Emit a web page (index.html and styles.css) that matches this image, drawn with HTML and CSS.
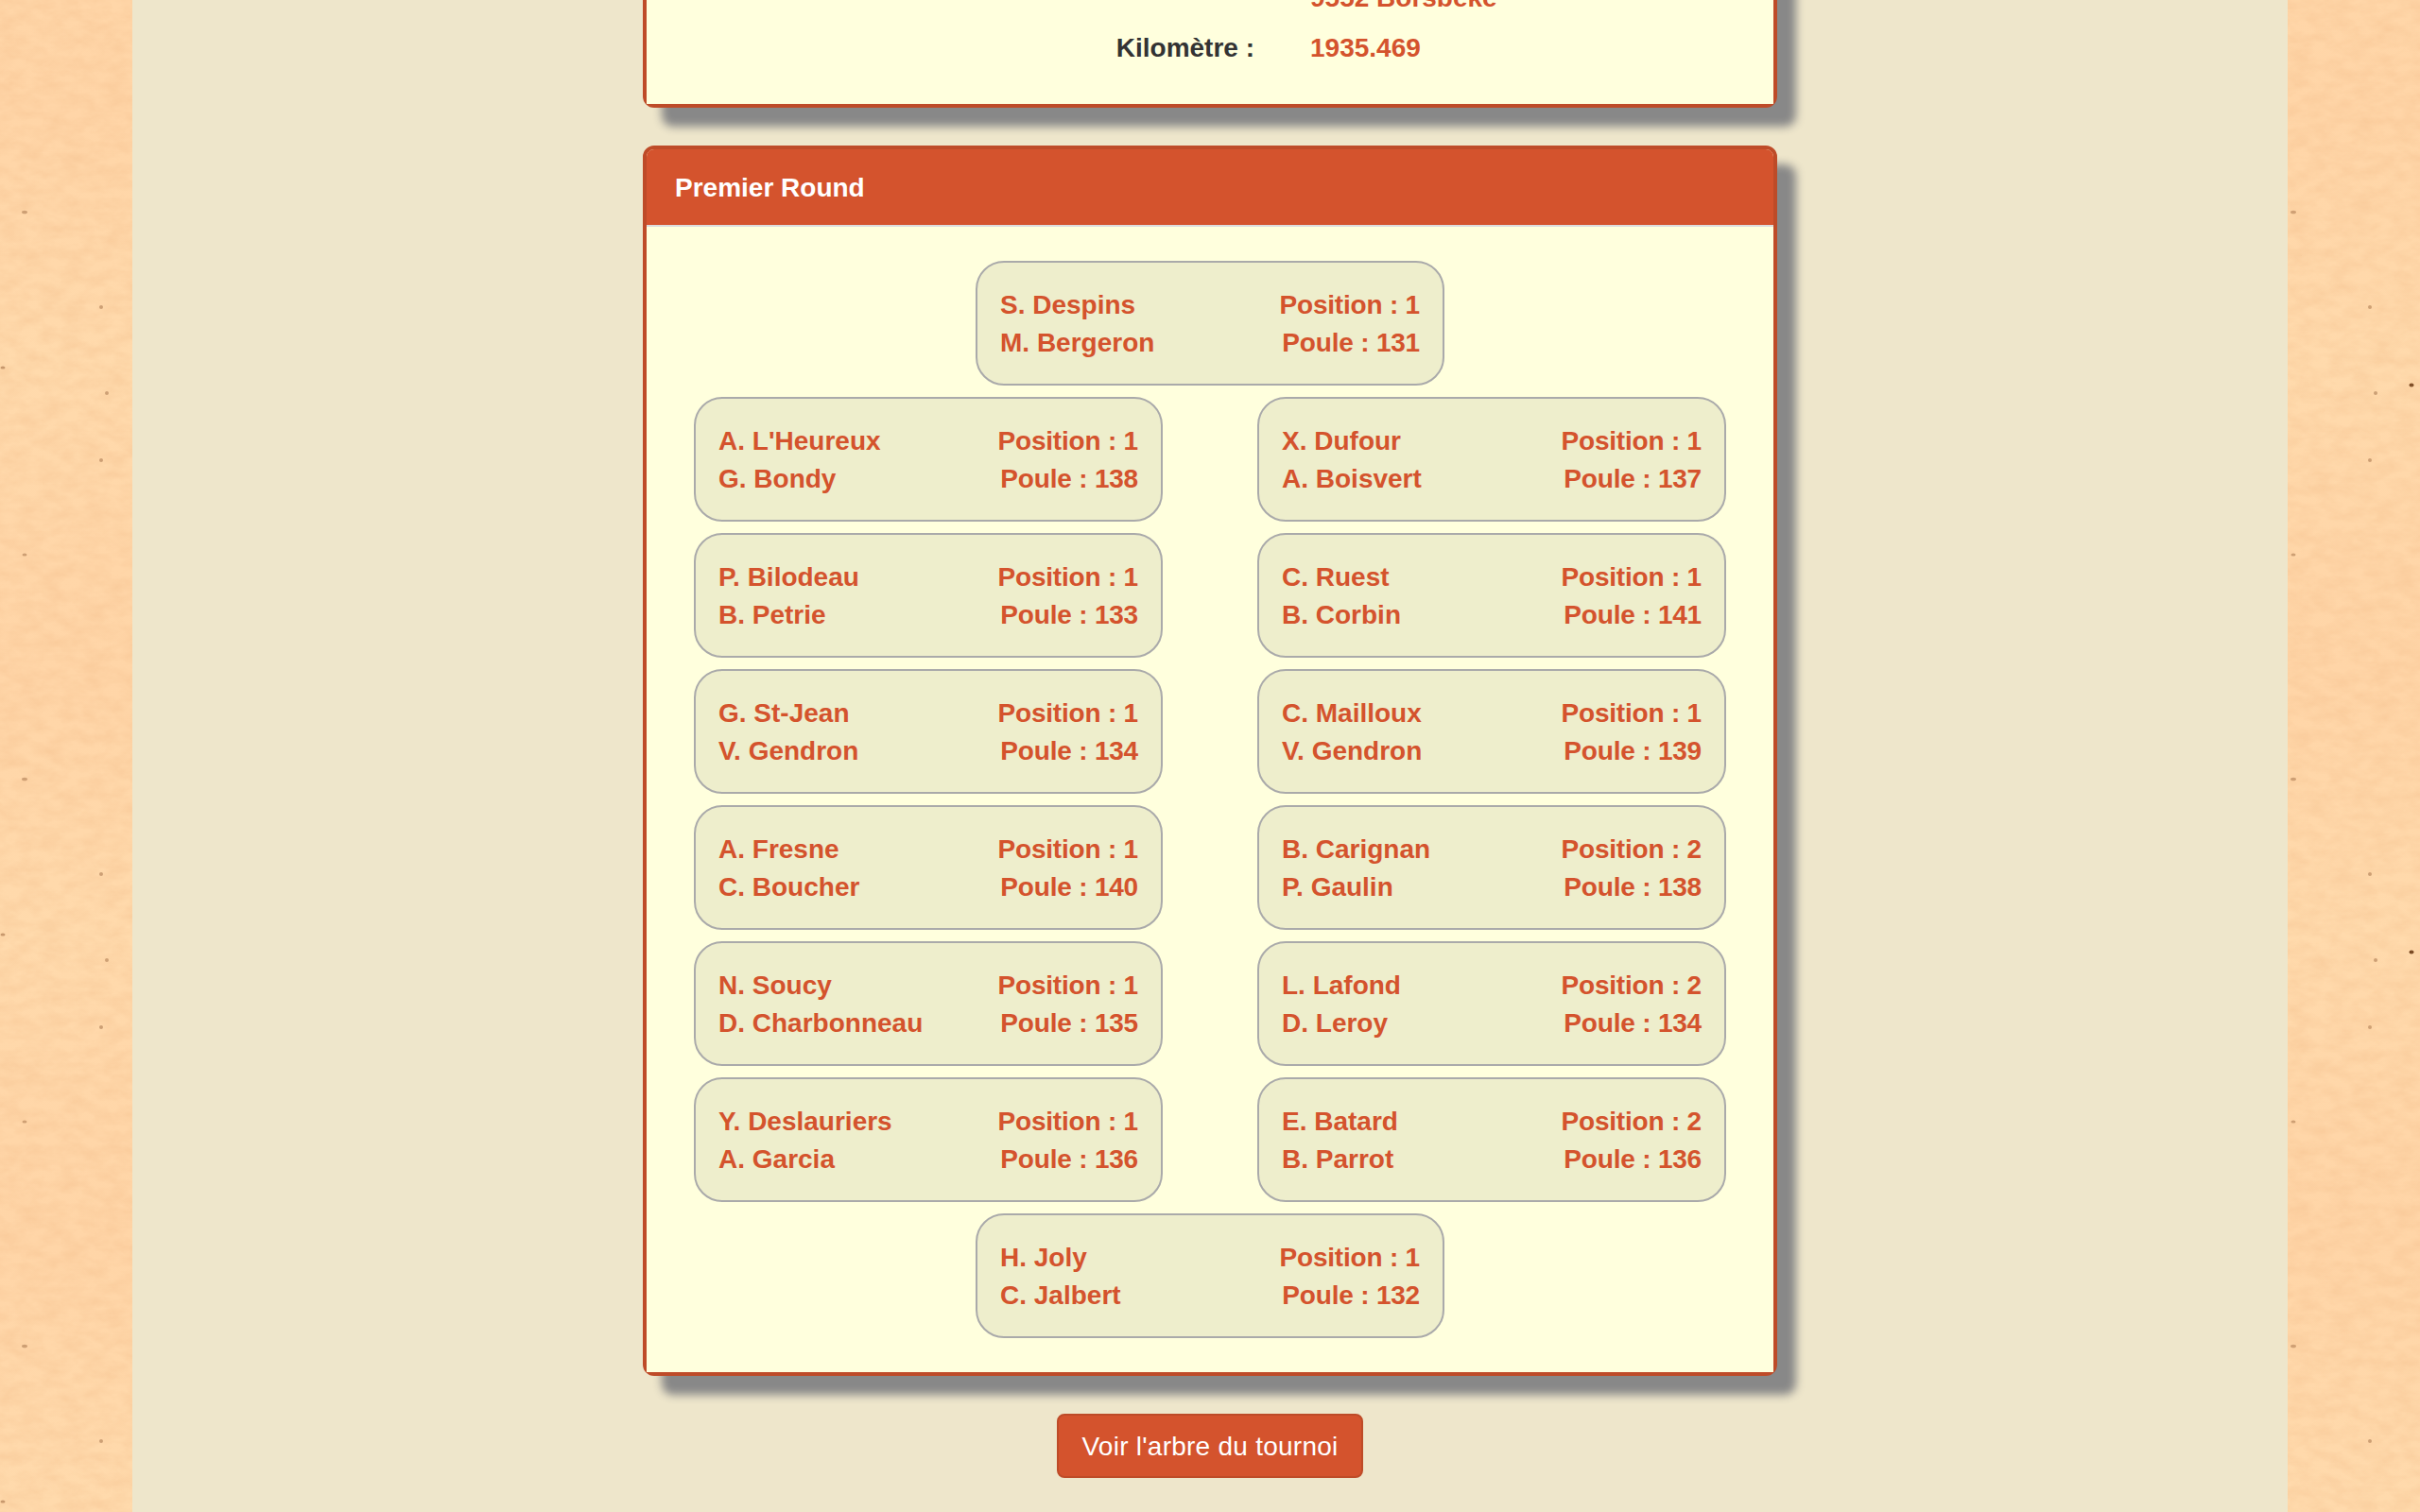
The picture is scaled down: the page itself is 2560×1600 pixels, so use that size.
FILE: index.html
```html
<!DOCTYPE html>
<html lang="fr">
<head>
<meta charset="utf-8">
<title>Tournoi</title>
<link rel="stylesheet" href="styles.css">
</head>
<body>
<svg class="paper" width="2560" height="1600" aria-hidden="true">
  <defs>
    <filter id="grain" x="0" y="0" width="100%" height="100%" color-interpolation-filters="sRGB">
      <feTurbulence type="fractalNoise" baseFrequency="0.045 0.08" numOctaves="4" seed="7"/>
      <feColorMatrix values="0 0 0 0 0.92  0 0 0 0 0.68  0 0 0 0 0.47  0.4 0 0 0 -0.12"/>
    </filter>
    <linearGradient id="bands" x1="0" y1="0" x2="0" y2="1">
      <stop offset="0" stop-color="#ffd6a8"/>
      <stop offset=".2" stop-color="#ffd5a7"/>
      <stop offset=".65" stop-color="#ffdaac"/>
      <stop offset="1" stop-color="#ffd6a8"/>
    </linearGradient>
    <pattern id="sheet" width="800" height="600" patternUnits="userSpaceOnUse">
      <rect width="800" height="600" fill="url(#bands)"/>
      <g fill="#a87850" opacity=".6">
        <ellipse cx="26" cy="224.500" rx="3" ry="1.800"/>
        <ellipse cx="107" cy="325" rx="2" ry="2"/>
        <ellipse cx="113" cy="416" rx="2" ry="2"/>
        <ellipse cx="107" cy="487" rx="2" ry="2"/>
        <ellipse cx="26" cy="587" rx="2.500" ry="1.500"/>
      </g>
    </pattern>
  </defs>
  <rect width="2560" height="1600" fill="url(#sheet)"/>
  <g fill="#a87850" opacity=".7"><ellipse cx="3" cy="389" rx="2.500" ry="1.500"/><ellipse cx="3" cy="989" rx="2.500" ry="1.500"/><ellipse cx="3" cy="1589" rx="2.500" ry="1.500"/></g>
  <g fill="#75451f"><ellipse cx="2551" cy="407.500" rx="2.500" ry="2"/><ellipse cx="2551" cy="1007.500" rx="2.500" ry="2"/></g>
  <rect width="140" height="1600" filter="url(#grain)"/>
  <rect x="2420" width="140" height="1600" filter="url(#grain)"/>
</svg>
<main class="page">
  <section class="panel panel-info">
    <dl class="facts panel-body">
      <dt></dt><dd>9552 Borsbeke</dd>
      <dt>Kilomètre :</dt><dd>1935.469</dd>
    </dl>
  </section>
  <section class="panel">
    <h3 class="panel-heading">Premier Round</h3>
    <div class="teams panel-body">
      <div class="team center"><p>S. Despins<br>M. Bergeron</p><p class="rank">Position : 1<br>Poule : 131</p></div>
      <div class="team"><p>A. L'Heureux<br>G. Bondy</p><p class="rank">Position : 1<br>Poule : 138</p></div>
      <div class="team"><p>X. Dufour<br>A. Boisvert</p><p class="rank">Position : 1<br>Poule : 137</p></div>
      <div class="team"><p>P. Bilodeau<br>B. Petrie</p><p class="rank">Position : 1<br>Poule : 133</p></div>
      <div class="team"><p>C. Ruest<br>B. Corbin</p><p class="rank">Position : 1<br>Poule : 141</p></div>
      <div class="team"><p>G. St-Jean<br>V. Gendron</p><p class="rank">Position : 1<br>Poule : 134</p></div>
      <div class="team"><p>C. Mailloux<br>V. Gendron</p><p class="rank">Position : 1<br>Poule : 139</p></div>
      <div class="team"><p>A. Fresne<br>C. Boucher</p><p class="rank">Position : 1<br>Poule : 140</p></div>
      <div class="team"><p>B. Carignan<br>P. Gaulin</p><p class="rank">Position : 2<br>Poule : 138</p></div>
      <div class="team"><p>N. Soucy<br>D. Charbonneau</p><p class="rank">Position : 1<br>Poule : 135</p></div>
      <div class="team"><p>L. Lafond<br>D. Leroy</p><p class="rank">Position : 2<br>Poule : 134</p></div>
      <div class="team"><p>Y. Deslauriers<br>A. Garcia</p><p class="rank">Position : 1<br>Poule : 136</p></div>
      <div class="team"><p>E. Batard<br>B. Parrot</p><p class="rank">Position : 2<br>Poule : 136</p></div>
      <div class="team center"><p>H. Joly<br>C. Jalbert</p><p class="rank">Position : 1<br>Poule : 132</p></div>
    </div>
  </section>
  <a class="button">Voir l'arbre du tournoi</a>
</main>
</body>
</html>
```
FILE: styles.css
```css
* {
  box-sizing: border-box;
}

body {
  margin: 0;
  height: 1600px;
  overflow: hidden;
  background: #fed5a5;
  color: #333;
  font: 28px/40px "Liberation Sans", Arial, sans-serif;
}

p,
dl,
dd,
h3 {
  margin: 0;
}

.paper {
  position: absolute;
  top: 0;
  left: 0;
  z-index: -1;
}

.page {
  display: flex;
  flex-direction: column;
  align-items: center;
  gap: 40px;
  width: 2280px;
  height: 1600px;
  margin: 0 auto;
  background: #eee6cb;
}

.panel {
  flex: none;
  width: 1200px;
  border: 4px solid #be4b28;
  border-radius: 12px;
  background: #ffffdd;
  box-shadow: 20px 20px 10px #888;
}

.panel-body {
  background: #ffffdd;
}

.panel-info {
  height: 174px;
  margin-top: -60px;
}

.facts {
  display: grid;
  grid-template-columns: 643px 1fr;
  column-gap: 59px;
  row-gap: 12px;
  height: 166px;
  padding-top: 34px;
  align-content: start;
  font-weight: bold;
}

.facts dt {
  text-align: right;
}

.facts dd {
  color: #d4532d;
}

.facts dt:nth-of-type(2),
.facts dd:nth-of-type(2) {
  padding-top: 1px;
}

.panel-heading {
  height: 82px;
  padding: 21px 30px 19px;
  border-bottom: 2px solid #ddd;
  border-radius: 8px 8px 0 0;
  background: #d4532d;
  color: #fff;
  font-size: 28px;
}

.teams {
  display: grid;
  grid-template-columns: 496px 496px;
  justify-content: center;
  gap: 12px 100px;
  padding: 36px 0;
}

.team {
  display: flex;
  justify-content: space-between;
  width: 496px;
  height: 132px;
  padding: 25px 24px 23px;
  border: 2px solid #aaa;
  border-radius: 30px;
  background: #eeeecc;
  color: #d4532d;
  font-weight: bold;
}

.center {
  grid-column: 1 / -1;
  justify-self: center;
}

.rank {
  letter-spacing: -0.2px;
  text-align: right;
}

.button {
  flex: none;
  width: 324px;
  height: 68px;
  padding: 13px 0 11px;
  border: 2px solid #be4b28;
  border-radius: 8px;
  background: #d4532d;
  color: #fff;
  letter-spacing: 0.25px;
  text-align: center;
}
```
